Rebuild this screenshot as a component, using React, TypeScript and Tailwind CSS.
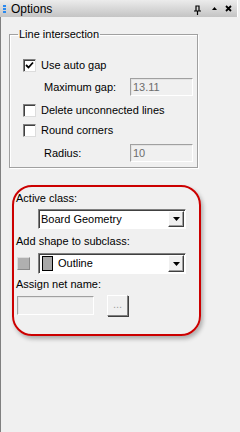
import React from "react";

// Options dock panel — classic Windows controls.

function Check({ checked }: { checked?: boolean }) {
  return (
    <div className="flex h-[13px] w-[13px] shrink-0 items-center justify-center border border-t-[#808080] border-l-[#808080] border-b-[#dcdcdc] border-r-[#dcdcdc] bg-white shadow-[inset_1px_1px_0_#404040]">
      {checked && (
        <svg width="9" height="9" viewBox="0 0 9 9">
          <path d="M1 4 L3.5 6.5 L8 1.5" fill="none" stroke="#000" strokeWidth="1.8" />
        </svg>
      )}
    </div>
  );
}

function DisabledInput({ value, className }: { value?: string; className: string }) {
  return (
    <div
      className={`flex items-center border border-t-[#a0a0a0] border-l-[#a0a0a0] border-b-white border-r-white bg-[#f0f0f0] pl-[2px] text-[#6d6d6d] shadow-[inset_1px_1px_0_#e3e3e3] ${className}`}
    >
      {value}
    </div>
  );
}

function Arrow() {
  return (
    <div className="flex h-full w-[16px] items-center justify-center border border-t-white border-l-white border-b-[#404040] border-r-[#404040] bg-[#f0f0f0] shadow-[inset_-1px_-1px_0_#a0a0a0]">
      <svg width="7" height="4" viewBox="0 0 7 4">
        <path d="M0 0 H7 L3.5 4 Z" fill="#000" />
      </svg>
    </div>
  );
}

export default function App() {
  return (
    <div className="h-[432px] w-[240px] overflow-hidden bg-[#f0f0f0] font-['Liberation_Sans',Arial,sans-serif] text-[11px] leading-[13px] text-black">
      {/* Title bar */}
      <div className="flex h-[17px] w-[238px] items-center border-r border-r-white bg-gradient-to-b from-[#ececec] to-[#c4c4c4]">
        <div className="ml-[3px] flex flex-col gap-[1px]">
          <div className="h-[2px] w-[3px] bg-[#2b8af0]" />
          <div className="h-[2px] w-[3px] bg-[#2b8af0]" />
          <div className="h-[2px] w-[3px] bg-[#2b8af0]" />
        </div>
        <span className="ml-[5px] text-[12px] leading-[14px]">Options</span>
        <div className="ml-auto mr-[5px] flex items-center">
          <svg width="7" height="10" viewBox="0 0 7 10" className="mt-[2px]">
            <path d="M2 1 H5 V6 H2 Z M0 6 H7 M3.5 6 V10" fill="none" stroke="#000" strokeWidth="1.2" />
          </svg>
          <svg width="5" height="3" viewBox="0 0 5 3" className="ml-[11px]">
            <path d="M0 3 H5 L2.5 0 Z" fill="#000" />
          </svg>
          <svg width="7" height="7" viewBox="0 0 7 7" className="ml-[8px]">
            <path d="M1 1 L6 6 M6 1 L1 6" stroke="#000" strokeWidth="1.8" />
          </svg>
        </div>
      </div>

      {/* Body */}
      <div className="h-[415px] border-l border-l-[#808080] pl-[8px] pt-[11px]">
        <fieldset className="h-[140px] w-[189px] border border-[#a0a0a0] pl-[8px] shadow-[inset_1px_1px_0_#fff,1px_1px_0_#fff]">
          <legend className="px-[1px]">Line intersection</legend>
          <div className="flex flex-col pl-[5px] pt-[18px]">
            <div className="flex h-[13px] items-center">
              <Check checked />
              <span className="ml-[5px]">Use auto gap</span>
            </div>
            <div className="mt-[6px] flex h-[18px] items-center pl-[21px]">
              <span>Maximum gap:</span>
              <DisabledInput value="13.11" className="ml-auto mr-[4px] h-[18px] w-[63px]" />
            </div>
            <div className="mt-[8px] flex h-[13px] items-center">
              <Check />
              <span className="ml-[5px]">Delete unconnected lines</span>
            </div>
            <div className="mt-[7px] flex h-[13px] items-center">
              <Check />
              <span className="ml-[5px]">Round corners</span>
            </div>
            <div className="mt-[7px] flex h-[18px] items-center pl-[21px]">
              <span>Radius:</span>
              <DisabledInput value="10" className="ml-auto mr-[4px] h-[18px] w-[63px]" />
            </div>
          </div>
        </fieldset>

        {/* Highlighted section */}
        <div className="ml-[3px] mt-[17px] h-[151px] w-[189px] rounded-[20px] border-2 border-[#cc0000] pl-[2px] pt-[5px] shadow-[2px_3px_4px_rgba(0,0,0,0.28)]">
          <div>Active class:</div>
          <div className="ml-[22px] mt-[4px] flex h-[20px] w-[148px] items-center border border-t-[#808080] border-l-[#808080] border-b-white border-r-white bg-white pr-[1px] shadow-[inset_1px_1px_0_#404040]">
            <span className="ml-[2px]">Board Geometry</span>
            <div className="ml-auto h-[16px]">
              <Arrow />
            </div>
          </div>
          <div className="mt-[6px]">Add shape to subclass:</div>
          <div className="mt-[5px] flex items-center">
            <div className="ml-[1px] h-[13px] w-[13px] border border-t-[#dcdcdc] border-l-[#dcdcdc] border-b-[#8a8a8a] border-r-[#8a8a8a] bg-[#b0b0b0]" />
            <div className="ml-[8px] flex h-[21px] w-[148px] items-center border border-t-[#808080] border-l-[#808080] border-b-white border-r-white bg-white pr-[1px] shadow-[inset_1px_1px_0_#404040]">
              <div className="ml-[3px] h-[15px] w-[11px] border border-black bg-[#a8a8a8]" />
              <span className="ml-[5px]">Outline</span>
              <div className="ml-auto h-[17px]">
                <Arrow />
              </div>
            </div>
          </div>
          <div className="mt-[4px]">Assign net name:</div>
          <div className="mt-[4px] flex items-center">
            <DisabledInput className="ml-[1px] h-[19px] w-[77px]" />
            <div className="ml-[13px] flex h-[21px] w-[21px] items-center justify-center border border-t-white border-l-white border-b-[#808080] border-r-[#808080] bg-[#f0f0f0] pb-[2px] text-[#a0a0a0] shadow-[1px_1px_0_#404040]">
              ...
            </div>
          </div>
        </div>
      </div>
    </div>
  );
}
